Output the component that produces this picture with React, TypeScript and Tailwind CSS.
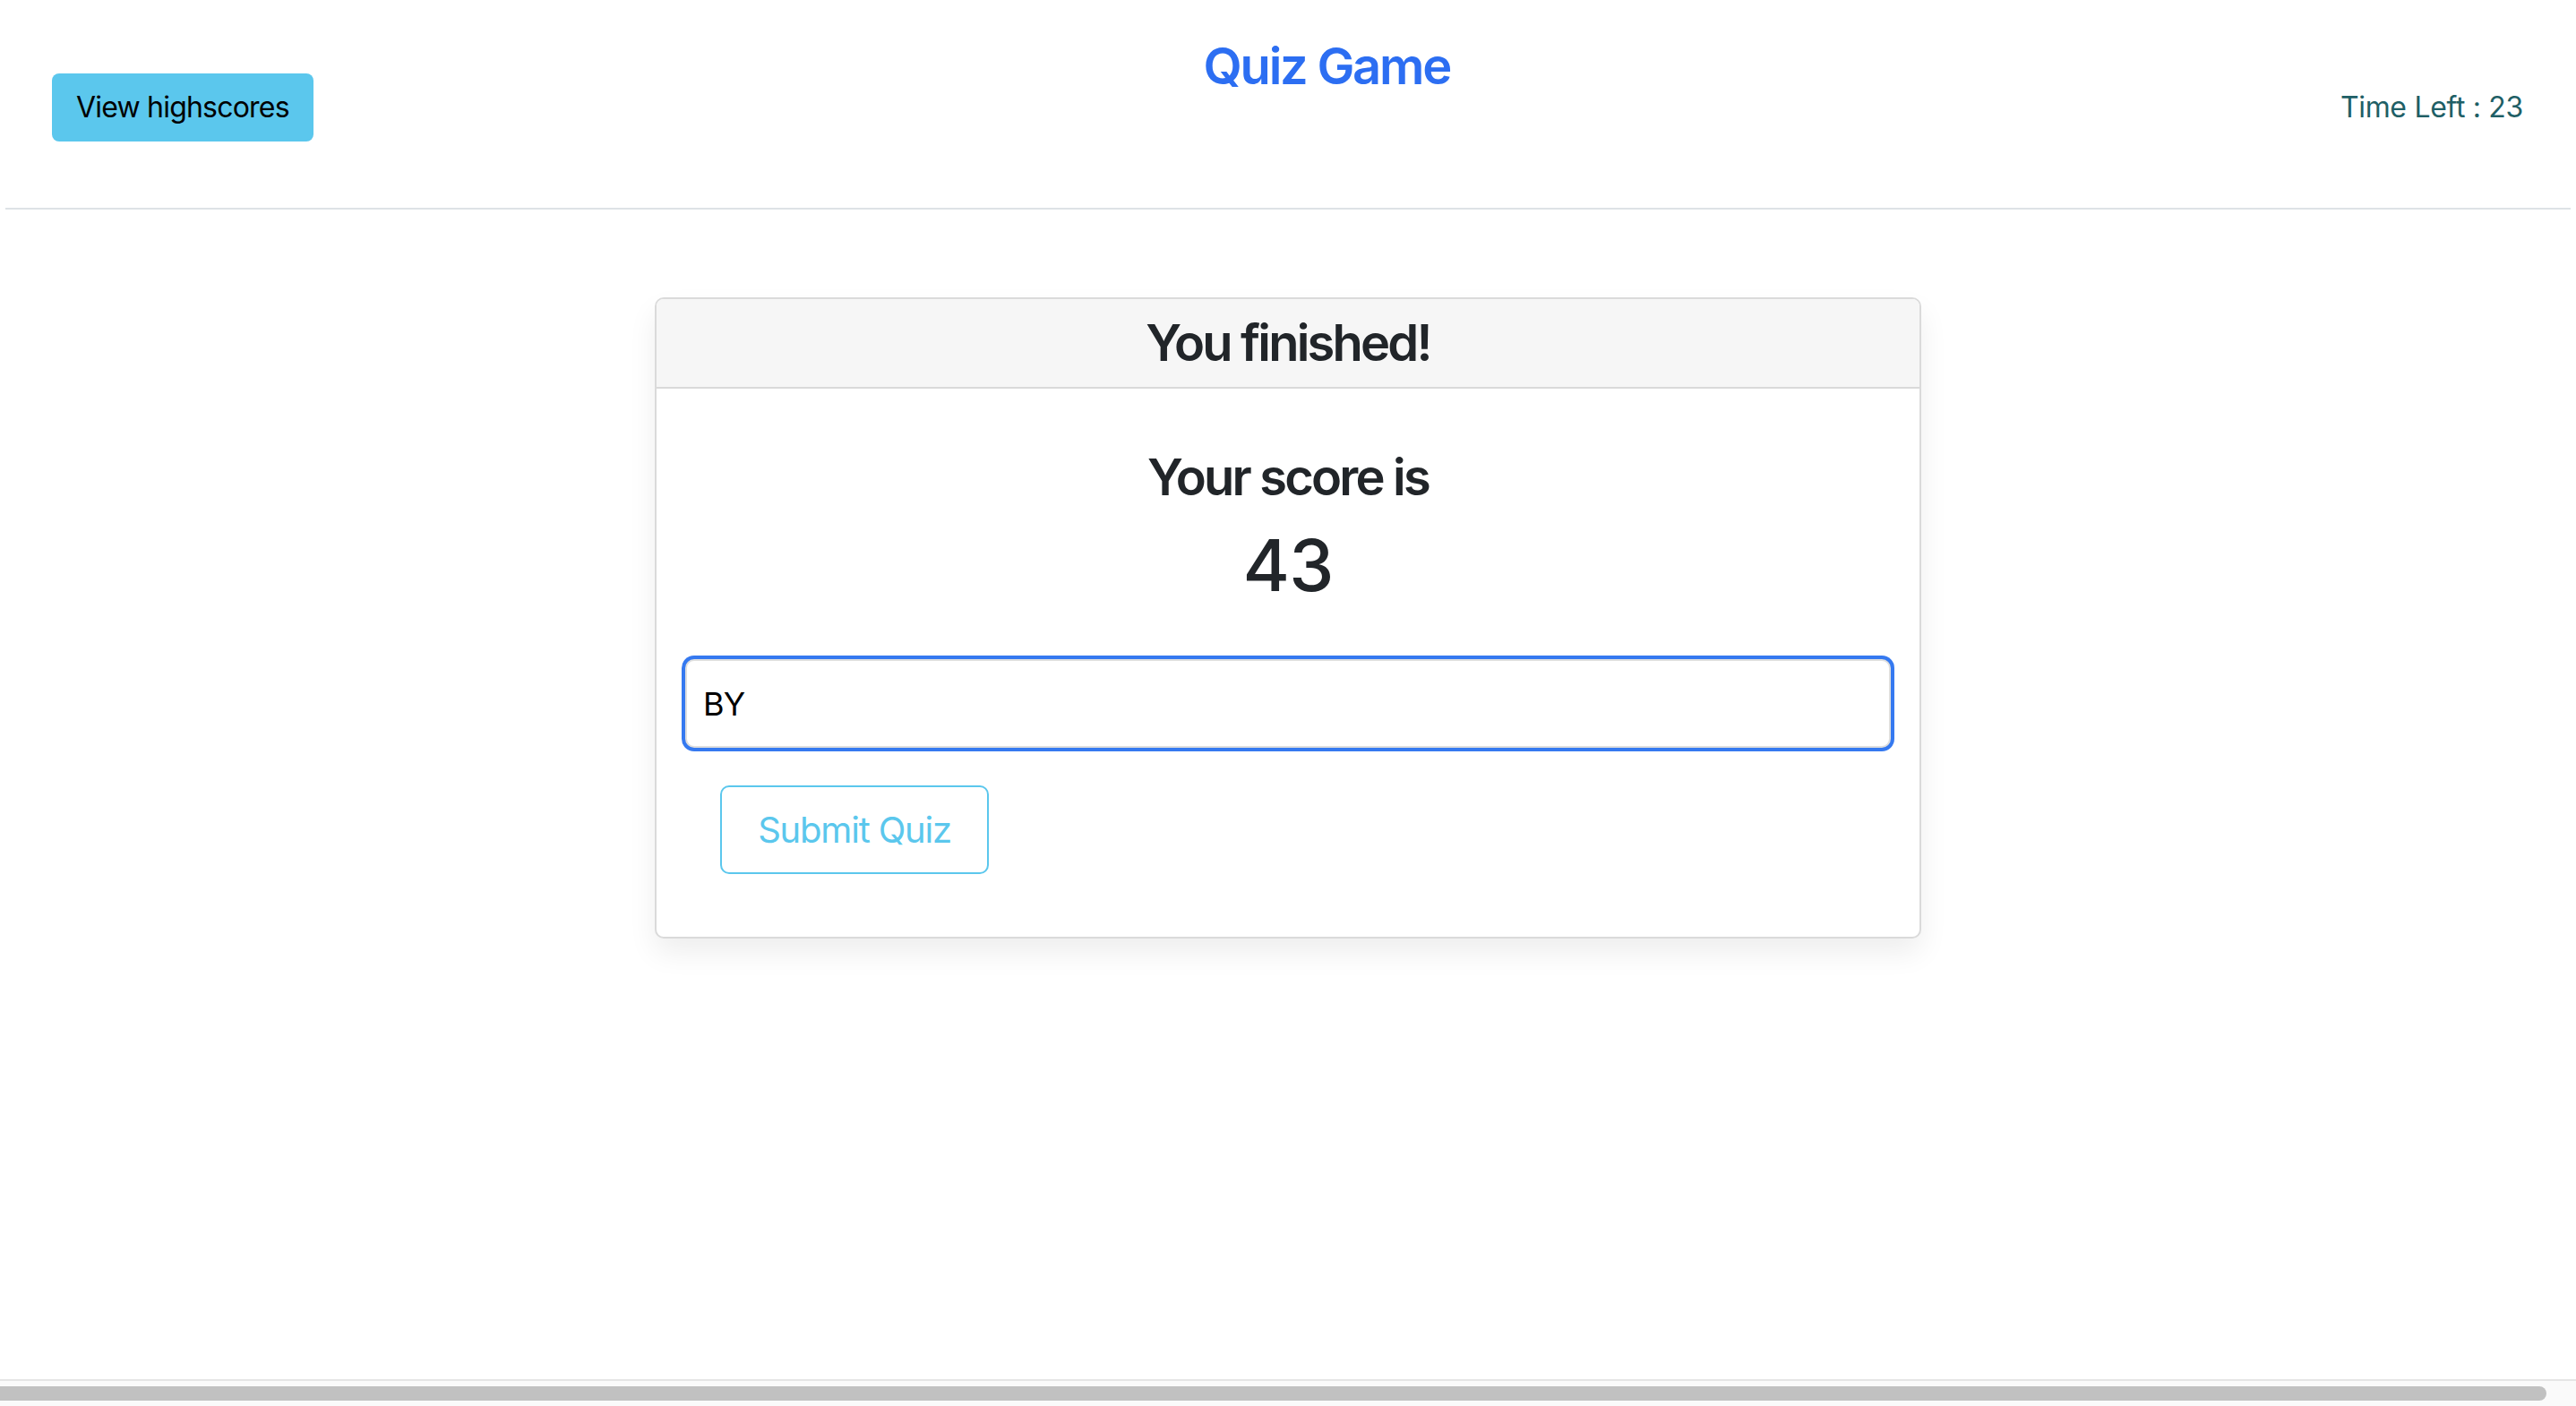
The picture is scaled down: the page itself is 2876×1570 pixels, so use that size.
function Header() {
  return (
    <header className="mx-[6px] flex h-[234px] items-start justify-between border-b-2 border-[#dee2e6] pl-[52px] pr-[53px]">
      <button className="mt-[82px] flex h-[76px] items-center rounded-[8px] bg-[#5bc7ed] px-[27px] text-[32px] leading-none tracking-[-0.025em] text-black">
        View highscores
      </button>
      <h1 className="mt-[41px] text-[56px] font-semibold leading-[67px] tracking-[-0.04em] text-[#2c6ef2]">Quiz Game</h1>
      <p className="mt-[96px] text-[32px] leading-[48px] tracking-[-0.01em] text-[#1f5f66]">Time Left : 23</p>
    </header>
  );
}

function ScoreCard() {
  return (
    <div className="w-[1414px] rounded-[10px] border-2 border-[#dadada] bg-white shadow-[0_16px_32px_rgba(0,0,0,0.07)]">
      <div className="flex h-[100px] items-center justify-center rounded-t-[8px] border-b-2 border-[#d9d9d9] bg-[#f6f6f6]">
        <h3 className="text-[56px] font-semibold leading-[67px] tracking-[-0.05em] text-[#212529]">You finished!</h3>
      </div>
      <div className="px-[32px] pb-[70px] pt-[66px] text-center">
        <h3 className="text-[56px] font-semibold leading-[67px] tracking-[-0.05em] text-[#212529]">Your score is</h3>
        <h1 className="mt-[16px] text-[80px] font-medium leading-[96px] tracking-[-0.01em] text-[#212529]">43</h1>
        <input
          readOnly
          value="BY"
          className="mt-[57px] block h-[99px] w-full rounded-[10px] border-2 border-[#dedede] bg-white px-[18px] text-[36px] tracking-[-0.02em] text-black ring-4 ring-[#3579f0] outline-none"
        />
        <div className="mt-[42px] flex">
          <button className="ml-[39px] flex h-[99px] w-[300px] items-center justify-center rounded-[10px] border-2 border-[#5bc7ed] text-[40px] leading-none tracking-[-0.03em] text-[#5bc7ed]">
            Submit Quiz
          </button>
        </div>
      </div>
    </div>
  );
}

export default function App() {
  return (
    <div className="min-h-screen bg-white font-['Inter',sans-serif]">
      <Header />
      <main className="flex justify-center pt-[98px]">
        <ScoreCard />
      </main>
      <div className="fixed bottom-0 left-0 h-[30px] w-full border-t-2 border-[#e5e5e5] bg-[#fafafa] pt-[6px]">
        <div className="h-[16px] w-[2843px] rounded-r-full bg-[#c1c1c1]" />
      </div>
    </div>
  );
}
